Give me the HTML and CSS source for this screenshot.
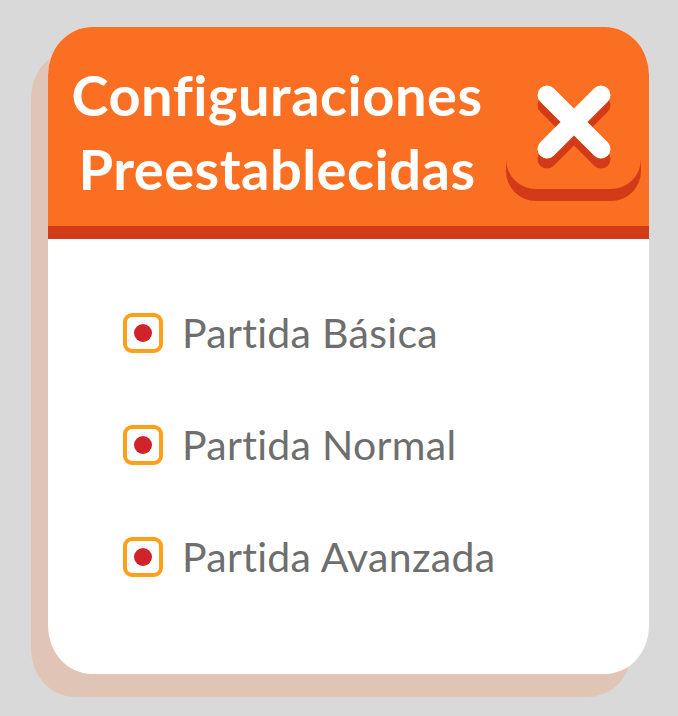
FILE: index.html
```html
<!DOCTYPE html>
<html lang="es">
<head>
<meta charset="utf-8">
<title>Configuraciones Preestablecidas</title>
<link rel="stylesheet" href="styles.css">
</head>
<body>
<div class="card">
  <div class="header">
    <h1 class="title">Configuraciones<br>Preestablecidas</h1>
    <button class="close" aria-label="Cerrar">
      <svg width="100" height="100" viewBox="0 0 100 100">
        <g stroke-linecap="round" stroke-width="19" fill="none">
          <path d="M23 33 L77 87 M77 33 L23 87" stroke="#d23a18"/>
          <path d="M23 23 L77 77 M77 23 L23 77" stroke="#ffffff"/>
        </g>
      </svg>
    </button>
  </div>
  <div class="stripe"></div>
  <ul class="options">
    <li class="option"><span class="check"><span class="dot"></span></span><span class="label">Partida Básica</span></li>
    <li class="option"><span class="check"><span class="dot"></span></span><span class="label">Partida Normal</span></li>
    <li class="option"><span class="check"><span class="dot"></span></span><span class="label">Partida Avanzada</span></li>
  </ul>
</div>
</body>
</html>
```

FILE: styles.css
```css
html, body {
  margin: 0;
  padding: 0;
}
body {
  background: #d9d9d9;
  width: 678px;
  height: 716px;
  overflow: hidden;
  font-family: Lato, "Open Sans", sans-serif;
}
.card {
  margin: 27px 0 0 48px;
  width: 601px;
  height: 647px;
  background: #ffffff;
  border-radius: 44px / 48px;
  overflow: hidden;
  box-shadow: -17px 23px 0 #e0c4b6;
  display: flex;
  flex-direction: column;
}
.header {
  background: #fb6f22;
  height: 199px;
  display: flex;
  align-items: flex-start;
}
.title {
  flex: 1;
  margin: 31px 0 0 0;
  color: #ffffff;
  font-weight: 700;
  font-size: 56px;
  letter-spacing: 0.5px;
  line-height: 74px;
  text-align: center;
}
.close {
  width: 135px;
  height: 134px;
  margin: 28px 8px 0 0;
  padding: 0;
  border: none;
  background: #fb6f22;
  border-radius: 30px;
  box-shadow: 0 12px 0 #d23a18;
  display: flex;
  align-items: center;
  justify-content: center;
}
.close svg {
  display: block;
}
.stripe {
  height: 13px;
  background: #d23a18;
}
.options {
  list-style: none;
  margin: 0;
  padding: 70px 0 0 75px;
  display: flex;
  flex-direction: column;
  gap: 64px;
}
.option {
  display: flex;
  align-items: center;
  height: 48px;
  gap: 19px;
}
.check {
  width: 40px;
  height: 40px;
  box-sizing: border-box;
  border: 4px solid #ffa01a;
  border-radius: 9px;
  display: flex;
  align-items: center;
  justify-content: center;
}
.dot {
  width: 18px;
  height: 18px;
  border-radius: 50%;
  background: #d0232a;
}
.label {
  color: #6e6e6e;
  font-size: 41px;
  letter-spacing: 0.3px;
  line-height: 48px;
}
```
